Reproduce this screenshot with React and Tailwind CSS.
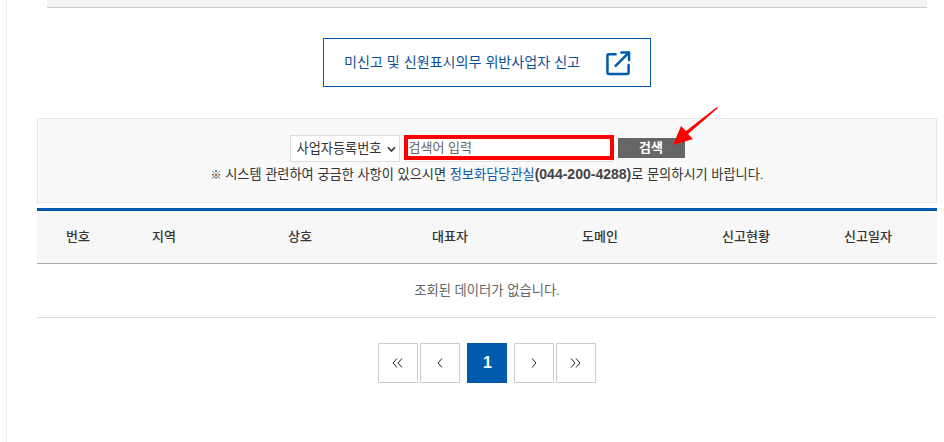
import React from 'react';

const FONT = 'font-["Liberation_Sans","Noto_Sans_CJK_KR",sans-serif]';

const columns = [
  { label: '번호', width: 'w-[82px]' },
  { label: '지역', width: 'w-[90px]' },
  { label: '상호', width: 'w-[182px]' },
  { label: '대표자', width: 'w-[118px]' },
  { label: '도메인', width: 'w-[182px]' },
  { label: '신고현황', width: 'w-[110px]' },
  { label: '신고일자', width: 'w-[136px] pr-[2px]' },
];

// chevrons for the pager, count = how many arrows
function Chevrons({ dir, count }) {
  const d = dir === 'left' ? 'M5 0.5 L1 5 L5 9.5' : 'M1 0.5 L5 5 L1 9.5';
  return (
    <svg width={count === 2 ? 12 : 6} height="10" viewBox={count === 2 ? '0 0 12 10' : '0 0 6 10'} fill="none" stroke="#222" strokeWidth="1">
      <path d={d} />
      {count === 2 && <path d={d} transform="translate(5 0)" />}
    </svg>
  );
}

function PageButton({ children }) {
  return (
    <button className="w-10 h-10 border border-[#cccccc] bg-white flex items-center justify-center">
      {children}
    </button>
  );
}

function SearchBar() {
  return (
    <div className="relative mt-[31px] h-[85px] border border-[#e6e6e6] bg-[#f9f9f9] pt-4">
      <div className="flex items-start justify-center">
        <div className="relative w-[110px] h-[27px] border border-[#dddddd] bg-white">
          <select className="w-full h-full appearance-none bg-transparent pl-[6px] text-[13.2px] leading-[25px] text-[#333333] outline-none">
            <option>사업자등록번호</option>
          </select>
          <svg className="absolute right-[3px] top-[10px]" width="9" height="7" viewBox="0 0 9 7" fill="none" stroke="#333" strokeWidth="1.6">
            <path d="M1 1.2 L4.5 5 L8 1.2" />
          </svg>
        </div>
        <div className="ml-1 w-[210px]">
          <div className="h-[25px] border-4 border-[#ff0000] bg-white flex items-center pt-[1px]">
            <input
              placeholder="검색어 입력"
              className="w-full h-[16px] px-[1px] py-0 text-[13px] leading-[16px] text-[#555555] placeholder:text-[#666666] outline-none"
            />
          </div>
          <div className="mx-[1px] h-[2px] border-x border-b border-[#dddddd] bg-white" />
        </div>
        <button className="ml-1 mt-[3px] w-[67px] h-5 bg-[#666666] text-white text-[13px] font-bold leading-5">
          검색
        </button>
      </div>
      <p className="mt-[2px] text-center text-[13.2px] leading-5 text-[#333333]">
        <span className="text-[11px]">※</span> 시스템 관련하여 궁금한 사항이 있으시면 <a className="text-[#0b5aa8]">정보화담당관실</a>
        <b className="text-[14px] text-[#444444]">(044-200-4288)</b>로 문의하시기 바랍니다.
      </p>
      {/* red annotation arrow drawn over the search button */}
      <svg className="absolute left-[630px] top-[-14px]" width="56" height="46" viewBox="0 0 56 46" fill="#ff0000">
        <path d="M49 2 L50 3 L20 29 L25 34 L5 40 L13 21 L18 26 Z" />
      </svg>
    </div>
  );
}

export default function App() {
  return (
    <div className={`w-[944px] h-[442px] overflow-hidden bg-white ${FONT}`}>
      <div className="ml-[6px] h-full border-l border-[#eeeeee] pl-[30px] pr-[7px]">
        <div className="mx-[10px] h-2 bg-[#f3f3f3] border-b border-[#c8c8c8]" />

        <a className="mx-auto mt-[30px] flex w-[328px] h-[49px] items-center border border-[#005bac] pl-5 text-[14.1px] text-[#0b4f96]">
          <span>미신고 및 신원표시의무 위반사업자 신고</span>
          <svg className="ml-[26px]" width="25" height="26" viewBox="0 0 26 26" fill="none" stroke="#005bac" strokeWidth="2.6" strokeLinecap="round" strokeLinejoin="round">
            <path d="M10 4 H3 Q1.5 4 1.5 5.5 V23 Q1.5 24.5 3 24.5 H22 Q23.5 24.5 23.5 23 V15" />
            <path d="M10 16 L23 3" />
            <path d="M16 2 H24 V10" />
          </svg>
        </a>

        <SearchBar />

        <table className="mt-[5px] w-full table-fixed border-t-[3px] border-[#005bac]">
          <thead>
            <tr className="h-[54px] bg-[#f7f7f7] border-b border-[#aaaaaa]">
              {columns.map((col) => (
                <th key={col.label} className={`${col.width} text-[13px] font-medium text-[#333333]`}>
                  {col.label}
                </th>
              ))}
            </tr>
          </thead>
          <tbody>
            <tr className="h-[54px] border-b border-[#dddddd]">
              <td colSpan={7} className="pt-[1px] text-center text-[13.3px] text-[#666666]">
                조회된 데이터가 없습니다.
              </td>
            </tr>
          </tbody>
        </table>

        <div className="mt-[25px] flex items-center justify-center">
          <PageButton><Chevrons dir="left" count={2} /></PageButton>
          <div className="ml-[2px]"><PageButton><Chevrons dir="left" count={1} /></PageButton></div>
          <div className="mx-[7px] w-10 h-10 bg-[#005bac] text-white text-[16px] font-bold flex items-center justify-center pl-[1px]">1</div>
          <PageButton><Chevrons dir="right" count={1} /></PageButton>
          <div className="ml-[2px]"><PageButton><Chevrons dir="right" count={2} /></PageButton></div>
        </div>
      </div>
    </div>
  );
}
